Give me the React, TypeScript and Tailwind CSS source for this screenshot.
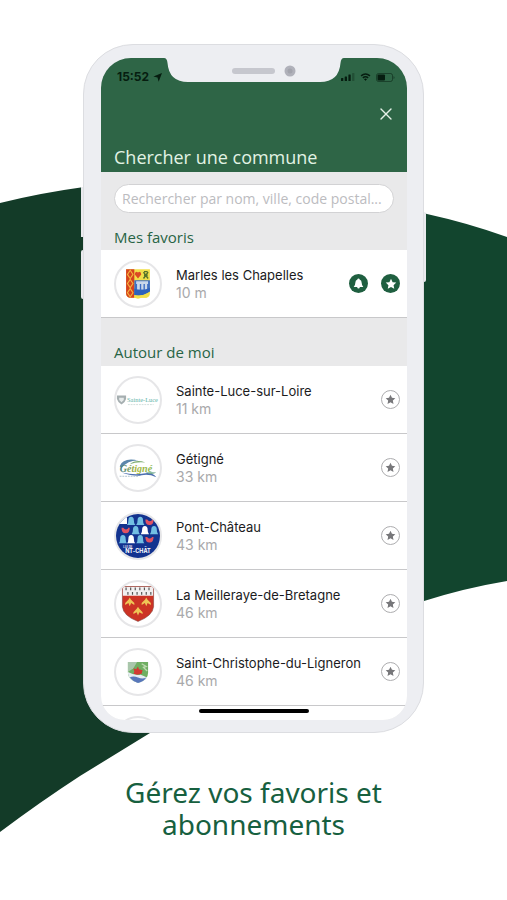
import { useState, type ReactNode } from 'react';
import { X } from 'lucide-react';

interface Commune {
  name: string;
  distance: string;
  logo: ReactNode;
  subscribed?: boolean;
}

const STAR = 'M12 1.500l3.200 6.800 7.300.9-5.400 5.100 1.400 7.300-6.500-3.600-6.500 3.600 1.400-7.300-5.400-5.100 7.300-.9z';

function MarlesLogo() {
  return (
    <svg viewBox="0 0 48 48" className="size-full" aria-hidden="true">
      <path d="M11 8h26v26q0 4-4 5h-5l-4 1-4-1h-5q-4-1-4-5z" fill="#f2df4a" />
      <path d="M11 8h9v31h-5q-4-1-4-5z" fill="#d6421f" />
      <path
        d="M15.500 9l-3 4.500 3 4.500 3-4.500zM15.500 19l-3 4.500 3 4.500 3-4.500zM15.500 29l-3 4.500 3 4.500 3-4.500z"
        fill="none"
        stroke="#f3b53c"
        strokeWidth="1.200"
      />
      <path d="M24 18l-3.500-4.500q0-3 2-3l1.500 1 1.500-1q2 0 2 3z" fill="#dc4a24" />
      <path d="M30 11l5 7M35 11l-5 7M30.500 10.500h4M30.500 14.500h4" stroke="#57742a" strokeWidth="1.600" />
      <path d="M20 20h17v12q-6 6-17 4z" fill="#3e6fc4" />
      <path d="M22 21h13v3H22zM23 24h3v6h-3zM27.500 24h2.500v6h-2.500zM31.500 24h2.500v6h-2.500z" fill="#c9d8ea" />
      <path d="M20 29q7 4 17-1v4q-6 6-17 4z" fill="#2d62bb" />
      <path d="M20 36q8 2 16-3-1 5-3 6H20z" fill="#f2df4a" />
    </svg>
  );
}

function SainteLuceLogo() {
  return (
    <svg viewBox="0 0 48 48" className="size-full" aria-hidden="true">
      <path d="M1 19h10v4q-1 4-5 6-4-2-5-6z" fill="#a5aeb0" />
      <path d="M3.500 21.500h5V24L6 26.500 3.500 24z" fill="#e7ebeb" />
      <text x="12" y="26" fontSize="7" fontFamily="Liberation Serif, serif" fill="#62b3a8">
        Sainte-Luce
      </text>
      <path d="M13 29h28" stroke="#cfdcda" strokeDasharray="2 1" />
    </svg>
  );
}

function GetigneLogo() {
  return (
    <svg viewBox="0 0 48 48" className="size-full" aria-hidden="true">
      <defs>
        <linearGradient id="getigne">
          <stop offset="0" stopColor="#3c7c86" />
          <stop offset="0.5" stopColor="#a8b63c" />
          <stop offset="1" stopColor="#86b652" />
        </linearGradient>
      </defs>
      <path d="M4 22Q8 12 25 16q-11-1-19 8z" fill="#5d87ac" />
      <path d="M15 20q7-6 17-2-10-1-17 2z" fill="#7fae74" />
      <text
        x="4"
        y="28"
        fontSize="11"
        fontStyle="italic"
        fontWeight="bold"
        fontFamily="Liberation Serif, serif"
        fill="url(#getigne)"
      >
        Gétigné
      </text>
      <path d="M6 29q15 3 24 1t14 4q-9-4-16-2T6 29z" fill="#4c6fb0" />
      <path d="M32 29q6-1 12 0-5 3-12 0z" fill="#69a387" />
      <path d="M4 33h21" stroke="#a9bccb" strokeDasharray="2 1" />
    </svg>
  );
}

function Bell({ x, y, color }: { x: number; y: number; color: string }) {
  return (
    <path
      transform={`translate(${x} ${y})`}
      d="M0 9q1.500-1 1.500-5Q1.500 0 4.500 0t3 4q0 4 1.500 5z"
      fill={color}
    />
  );
}

function Smile({ x, y }: { x: number; y: number }) {
  return (
    <path
      transform={`translate(${x} ${y})`}
      d="M0 0h2q2 3 5 1V0h2q0 6-4.500 6T0 0z"
      fill="#df5263"
    />
  );
}

function PontChateauLogo() {
  return (
    <svg viewBox="0 0 48 48" className="size-full" aria-hidden="true">
      <path d="M0 0h48v48H0z" fill="#13338f" />
      <path d="M3 3h9v8H1z" fill="#fff" />
      <Bell x={12} y={3} color="#72bfe3" />
      <Bell x={22} y={3} color="#72bfe3" />
      <Smile x={32} y={6} />
      <Smile x={6} y={15} />
      <Bell x={17} y={13} color="#72bfe3" />
      <Bell x={27} y={13} color="#fff" />
      <Bell x={37} y={13} color="#72bfe3" />
      <Bell x={3} y={23} color="#72bfe3" />
      <Bell x={12} y={23} color="#fff" />
      <Bell x={22} y={23} color="#72bfe3" />
      <Smile x={32} y={25} />
      <text x="8" y="37" fontSize="3" fontWeight="bold" fontFamily="Inter, sans-serif" fill="#fff">
        LLE DE
      </text>
      <text x="10" y="43" fontSize="6" fontWeight="bold" fontFamily="Inter, sans-serif" fill="#fff">
        NT-CHÂT
      </text>
    </svg>
  );
}

function MeillerayeLogo() {
  return (
    <svg viewBox="0 0 48 48" className="size-full" aria-hidden="true">
      <path d="M7 5h34v22q-1 10-17 16Q8 37 7 27z" fill="#cc3325" stroke="#7c3a35" strokeWidth="0.6" />
      <path d="M7.500 5.500h33V15h-33z" fill="#f1efef" />
      <path
        d="M11 6v3M16 6v3M21 6v3M26 6v3M31 6v3M36 6v3M13 11v3M18 11v3M23 11v3M28 11v3M33 11v3M38 11v3"
        stroke="#555"
        strokeWidth="1.300"
      />
      {['translate(15 17)', 'translate(33 17)', 'translate(24 27)'].map((t) => (
        <path
          key={t}
          transform={t}
          d="M0 0l1.200 2L5 6v2L1.500 6 0 9.500-1.500 6-5 8V6l3.800-4z"
          fill="#efc556"
        />
      ))}
    </svg>
  );
}

function SaintChristopheLogo() {
  return (
    <svg viewBox="0 0 48 48" className="size-full" aria-hidden="true">
      <path d="M13 13h22v12q0 8-11 11-11-4-11-11z" fill="#6fae62" />
      <path d="M13 13h10l-4 7-6 4z" fill="#a9c6ab" />
      <path d="M28 15l5 3-3 1 4 4" stroke="#bcd8ae" strokeWidth="1.500" fill="none" />
      <path d="M13 24q7 4 14 3l7 3q-3 4-10 6-11-4-11-11z" fill="#e6ecf3" />
      <path d="M15 30q4-2 9 0t9 0q-2 4-9 6-6-2-9-6z" fill="#5877ba" />
      <path d="M19 20l3 1 2-3 1 3 4 1-1 4-5 1-4-1 1-2z" fill="#d33a33" />
    </svg>
  );
}

const favorites: Commune[] = [
  { name: 'Marles les Chapelles', distance: '10 m', logo: <MarlesLogo />, subscribed: true },
];

const nearby: Commune[] = [
  { name: 'Sainte-Luce-sur-Loire', distance: '11 km', logo: <SainteLuceLogo /> },
  { name: 'Gétigné', distance: '33 km', logo: <GetigneLogo /> },
  { name: 'Pont-Château', distance: '43 km', logo: <PontChateauLogo /> },
  { name: 'La Meilleraye-de-Bretagne', distance: '46 km', logo: <MeillerayeLogo /> },
  { name: 'Saint-Christophe-du-Ligneron', distance: '46 km', logo: <SaintChristopheLogo /> },
];

function Avatar({ children }: { children?: ReactNode }) {
  return (
    <div className="size-12 shrink-0 overflow-hidden rounded-full border-2 border-[#e6e6e8] bg-white">
      {children}
    </div>
  );
}

function CommuneRow({ commune }: { commune: Commune }) {
  const { name, distance, logo, subscribed } = commune;
  return (
    <li className="flex h-[68px] items-center border-b border-[#c8c8ca] bg-white pr-[7px] pl-[13px]">
      <Avatar>{logo}</Avatar>
      <div className="ml-[14px] min-w-0 flex-1 pt-px font-[Inter,sans-serif] leading-[17px] whitespace-nowrap">
        <p className="text-[13px] text-[#1b1b1d]">{name}</p>
        <p className="text-[14px] text-[#a9a9ab]">{distance}</p>
      </div>
      {subscribed ? (
        <div className="flex gap-[13px]">
          <button
            aria-label="Notifications"
            className="flex size-[19px] items-center justify-center rounded-full bg-[#1f5f40]"
          >
            <svg viewBox="0 0 24 24" className="size-[11px] fill-white">
              <path d="M12 1q2 0 2.500 2.500Q19 5.500 19 11q0 5 3.500 8.500H15Q14.500 23 12 23t-3-3.500H1.500Q5 16 5 11q0-5.500 4.500-7.500Q10 1 12 1z" />
            </svg>
          </button>
          <button
            aria-label="Retirer des favoris"
            className="flex size-[19px] items-center justify-center rounded-full bg-[#1f5f40]"
          >
            <svg viewBox="0 0 24 24" className="size-3 shrink-0 fill-white">
              <path d={STAR} />
            </svg>
          </button>
        </div>
      ) : (
        <button
          aria-label="Ajouter aux favoris"
          className="flex size-[19px] items-center justify-center rounded-full border border-[#adadaf]"
        >
          <svg viewBox="0 0 24 24" className="size-[11px] shrink-0 fill-[#77777a]">
            <path d={STAR} />
          </svg>
        </button>
      )}
    </li>
  );
}

function StatusBar() {
  return (
    <div className="flex h-[38px] items-center justify-between pr-3 pl-4 text-[#061d10]">
      <div className="flex items-center gap-1 font-[Inter,sans-serif] text-[12px] font-bold">
        15:52
        <svg viewBox="0 0 10 10" className="size-[9px] fill-current">
          <path d="M10 0L6.300 9.600 5 5 .4 3.900z" />
        </svg>
      </div>
      <div className="flex items-center gap-[5px]">
        <svg viewBox="0 0 14 8" className="h-2 w-[14px] fill-current">
          <rect y="5" width="2.300" height="3" rx=".5" />
          <rect x="3.700" y="3.500" width="2.300" height="4.500" rx=".5" />
          <rect x="7.400" y="1.500" width="2.300" height="6.500" rx=".5" />
          <rect x="11.100" width="2.300" height="8" rx=".5" opacity=".3" />
        </svg>
        <svg viewBox="0 0 12 9" className="h-2 w-[11px] fill-none stroke-current" strokeWidth="1.700">
          <path d="M1 3.200q5-4.200 10 0M3 5.500q3-2.500 6 0" />
          <path d="M6 8.500L4.600 7q1.400-1 2.800 0z" strokeWidth=".5" fill="currentColor" />
        </svg>
        <svg viewBox="0 0 19 9" className="h-[9px] w-[19px]">
          <rect x=".5" y=".5" width="16" height="8" rx="2" fill="none" stroke="currentColor" opacity=".5" />
          <rect x="1.500" y="1.500" width="7.500" height="6" rx="1" fill="currentColor" />
          <path d="M17.500 3v3q1-.5 1-1.500t-1-1.500z" fill="currentColor" opacity=".5" />
        </svg>
      </div>
    </div>
  );
}

function SectionTitle({ children }: { children: ReactNode }) {
  return (
    <h2 className="px-[13px] font-['Open_Sans',sans-serif] text-[15px] leading-5 text-[#286445]">
      {children}
    </h2>
  );
}

function Phone() {
  const [query, setQuery] = useState('');

  return (
    <div className="relative">
      <div className="absolute top-[143px] -left-[2px] h-[50px] w-1 bg-[#e9eaee]" />
      <div className="absolute top-[206px] -left-[2px] h-[49px] w-1 rounded-l-xs bg-[#e9eaee]" />
      <div className="absolute top-[168px] -right-[2px] h-[70px] w-1 rounded-r-xs bg-[#e9eaee]" />

      <div className="relative rounded-[50px] border border-[#dcdde1] bg-[#edeef2] pt-[13px] pr-4 pb-3 pl-[17px]">
        <div className="relative h-[662px] overflow-hidden rounded-t-[30px] rounded-b-[24px] bg-[#e9e9ea]">
          <header className="h-[114px] bg-[#2e6546]">
            <StatusBar />
            <div className="flex justify-end pr-[11px]">
              <button aria-label="Fermer" className="text-[#e6f1e8]">
                <X size={20} strokeWidth={1.6} className="mt-2" />
              </button>
            </div>
            <h1 className="mt-[21px] px-[13px] font-['Open_Sans',sans-serif] text-[18px] leading-6 text-[#e2f3e4]">
              Chercher une commune
            </h1>
          </header>

          <div className="px-[13px] pt-3">
            <input
              type="text"
              aria-label="Rechercher une commune"
              placeholder="Rechercher par nom, ville, code postal..."
              value={query}
              onChange={(e) => setQuery(e.target.value)}
              className="block h-[29px] w-full rounded-full border border-[#d2d2d4] bg-white px-[7px] font-['Open_Sans',sans-serif] text-[14px] text-[#333] placeholder:text-[#bcbcbf]"
            />
          </div>

          <div className="pt-[14px] pb-[3px]">
            <SectionTitle>Mes favoris</SectionTitle>
          </div>
          <ul>
            {favorites.map((c) => (
              <CommuneRow key={c.name} commune={c} />
            ))}
          </ul>

          <div className="pt-6 pb-1">
            <SectionTitle>Autour de moi</SectionTitle>
          </div>
          <ul>
            {nearby.map((c) => (
              <CommuneRow key={c.name} commune={c} />
            ))}
            <li className="flex h-[68px] items-center bg-white pl-[13px]">
              <Avatar />
            </li>
          </ul>

          {/* notch */}
          <div className="absolute inset-x-0 top-0 flex justify-center">
            <svg viewBox="0 0 180 24" className="h-6 w-[180px]" aria-hidden="true">
              <path d="M0 0Q3 0 3.500 5Q5 24 24 24H156Q175 24 176.500 5Q177 0 180 0z" fill="#edeef2" />
              <rect x="68" y="10" width="43" height="6" rx="3" fill="#c6c7ce" />
              <circle cx="126" cy="13" r="5.500" fill="#b0b1ba" />
              <circle cx="126" cy="13" r="2.500" fill="#a2a3ac" />
            </svg>
          </div>
          {/* home indicator */}
          <div className="absolute inset-x-0 bottom-[7px] flex justify-center">
            <div className="h-1 w-[110px] rounded-full bg-black" />
          </div>
        </div>
      </div>
    </div>
  );
}

export default function App() {
  return (
    <main className="relative min-h-screen overflow-hidden bg-white px-[83px] pt-11 pb-15 font-['Noto_Sans',sans-serif]">
      <svg
        viewBox="0 0 507 900"
        preserveAspectRatio="none"
        className="absolute inset-0 size-full"
        aria-hidden="true"
      >
        <path d="M0 203Q40 193 84 187L254 180V676Q200 702 150 733L80 776Q40 802 0 832z" fill="#133b28" />
        <path d="M254 180Q340 188 427 214Q468 223 507 237V581Q465 588 424 601L254 676z" fill="#12452e" />
      </svg>
      <Phone />
      <p className="relative mt-[43px] text-center text-[28px] leading-8 text-[#17603f]">
        Gérez vos favoris et
        <br />
        abonnements
      </p>
    </main>
  );
}
